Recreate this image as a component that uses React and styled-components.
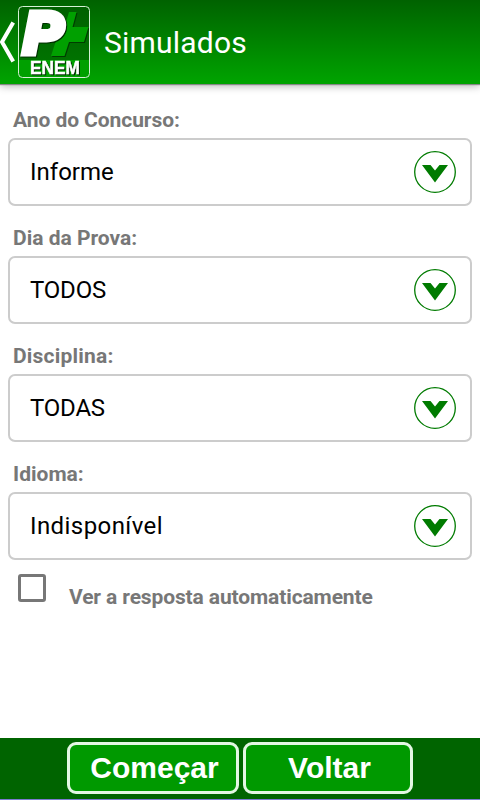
import { useState } from 'react'
import styled, { createGlobalStyle } from 'styled-components'

const fields = [
  { name: 'ano', label: 'Ano do Concurso:', value: 'Informe', labelSpacing: -0.06 },
  { name: 'dia', label: 'Dia da Prova:', value: 'TODOS', valueSpacing: -0.2 },
  {
    name: 'disciplina',
    label: 'Disciplina:',
    value: 'TODAS',
    labelSpacing: 0.2,
    valueSpacing: -0.2,
  },
  { name: 'idioma', label: 'Idioma:', value: 'Indisponível', valueSpacing: 0.42 },
]

const BackIcon = () => (
  <svg width='16' height='44' viewBox='0 0 16 44'>
    <path d='M13.2 2.5 L2 22 L13.2 41.5' fill='none' stroke='#fff' strokeWidth='4' />
  </svg>
)

const Logo = () => (
  <svg width='72' height='72' viewBox='0 0 72 72'>
    <defs>
      <linearGradient id='logoBg' x1='0' y1='0' x2='0' y2='1'>
        <stop offset='0' stopColor='#006000' />
        <stop offset='1' stopColor='#007800' />
      </linearGradient>
    </defs>
    <rect x='0.5' y='0.5' width='71' height='71' rx='4' fill='url(#logoBg)' />
    <path d='M1 54h70v14q0 3 -3 3H4q-3 0 -3 -3z' fill='#00a000' />
    <Plus d='M51 6h7.5l-4 15h16l-4.5 15H51l-4.5 14H33l4.500-14H34l4-15h8.500z' />
    <LogoLetter x='5.5' y='47' textLength='39' lengthAdjust='spacingAndGlyphs'>
      P
    </LogoLetter>
    <LogoName x='12' y='68' textLength='50' lengthAdjust='spacingAndGlyphs'>
      ENEM
    </LogoName>
    <rect x='0.5' y='0.5' width='71' height='71' rx='4' fill='none' stroke='#d5f0d5' />
  </svg>
)

const ArrowIcon = () => (
  <svg width='42' height='42' viewBox='0 0 42 42'>
    <circle cx='21' cy='21' r='20.3' fill='#fff' stroke='#007b00' strokeWidth='1.3' />
    <path d='M8 14h8.500l4.500 5.500 4.500-5.500H34L21 31.500z' fill='#007b00' />
  </svg>
)

const App = () => {
  const [showAnswer, setShowAnswer] = useState(false)

  return (
    <>
      <GlobalStyle />
      <Page>
        <Header>
          <BackIcon />
          <Logo />
          <Title>Simulados</Title>
        </Header>
        <Form>
          {fields.map(({ name, label, value, labelSpacing, valueSpacing }) => (
            <div key={name}>
              <Label $spacing={labelSpacing}>{label}</Label>
              <Select type='button' name={name}>
                <Value $spacing={valueSpacing}>{value}</Value>
                <ArrowIcon />
              </Select>
            </div>
          ))}
          {/* answer option */}
          <CheckRow>
            <Checkbox
              type='checkbox'
              checked={showAnswer}
              onChange={() => setShowAnswer(!showAnswer)}
            />
            <CheckText>Ver a resposta automaticamente</CheckText>
          </CheckRow>
        </Form>
        <Footer>
          <Button $width={172}>Começar</Button>
          <Button $width={170}>Voltar</Button>
        </Footer>
      </Page>
    </>
  )
}

const GlobalStyle = createGlobalStyle`
  * {
    box-sizing: border-box;
  }
  body {
    margin: 0;
    background: #fff;
    font-family: Roboto, sans-serif;
  }
  svg {
    display: block;
    flex: none;
  }
`

const Page = styled.main`
  display: flex;
  flex-direction: column;
  width: 480px;
  height: 800px;
  overflow: hidden;
`

const Header = styled.header`
  display: flex;
  align-items: center;
  flex: none;
  height: 84px;
  gap: 2px;
  background: linear-gradient(#006200, #00a400);
  box-shadow: 0 1px 1px #888, 0 2px 8px rgba(0, 0, 0, 0.3);
`

const Title = styled.h1`
  margin: 2px 0 0 12px;
  color: #fff;
  font-size: 30px;
  font-weight: 400;
  line-height: 36px;
  letter-spacing: 0.2px;
`

const Plus = styled.path`
  fill: #00a000;
  filter: drop-shadow(1px 1px 0 #003c00);
`

const LogoLetter = styled.text`
  font: italic bold 57px 'Liberation Sans', sans-serif;
  fill: #fff;
  stroke: #fff;
  stroke-width: 7px;
  filter: drop-shadow(1.5px 1.5px 0 #003000);
`

const LogoName = styled.text`
  font: bold 18px 'Liberation Sans', sans-serif;
  fill: #fff;
  stroke: #fff;
  stroke-width: 0.5px;
  filter: drop-shadow(1px 1px 0 #002800);
`

const Form = styled.section`
  flex: 1;
  padding: 4px 8px 0;
`

const Label = styled.div`
  height: 50px;
  padding: 20px 5px 0;
  color: #777;
  font-size: 21px;
  font-weight: 700;
  line-height: 25px;
  letter-spacing: ${({ $spacing = 0 }) => $spacing}px;
`

const Select = styled.button`
  display: flex;
  align-items: center;
  justify-content: space-between;
  width: 100%;
  height: 68px;
  padding: 0 14px 0 20px;
  border: 2px solid #ccc;
  border-radius: 7px;
  background: #fff;
  color: #000;
  font-family: inherit;
`

const Value = styled.span`
  font-size: 24px;
  line-height: 28px;
  letter-spacing: ${({ $spacing = 0 }) => $spacing}px;
`

const CheckRow = styled.label`
  display: flex;
  align-items: flex-start;
  padding: 14px 10px 0;
`

const Checkbox = styled.input`
  appearance: none;
  flex: none;
  width: 28px;
  height: 28px;
  margin: 0;
  border: 3px solid #777;
  border-radius: 3px;
  background: ${({ checked }) => (checked ? '#007b00' : '#fff')};
`

const CheckText = styled.span`
  margin: 11px 0 0 23px;
  color: #777;
  font-size: 21px;
  font-weight: 700;
  line-height: 25px;
  letter-spacing: -0.12px;
`

const Footer = styled.footer`
  display: flex;
  justify-content: center;
  flex: none;
  gap: 4px;
  height: 62px;
  padding-top: 4px;
  border-bottom: 1px solid #7b7bd0;
  background: #006400;
`

const Button = styled.button`
  width: ${({ $width }) => $width}px;
  height: 52px;
  padding: 0 0 0 3px;
  border: 3px solid #e4f7e4;
  border-radius: 9px;
  background: #009900;
  color: #fff;
  font: bold 30px 'Liberation Sans', Arial, sans-serif;
`

export default App
